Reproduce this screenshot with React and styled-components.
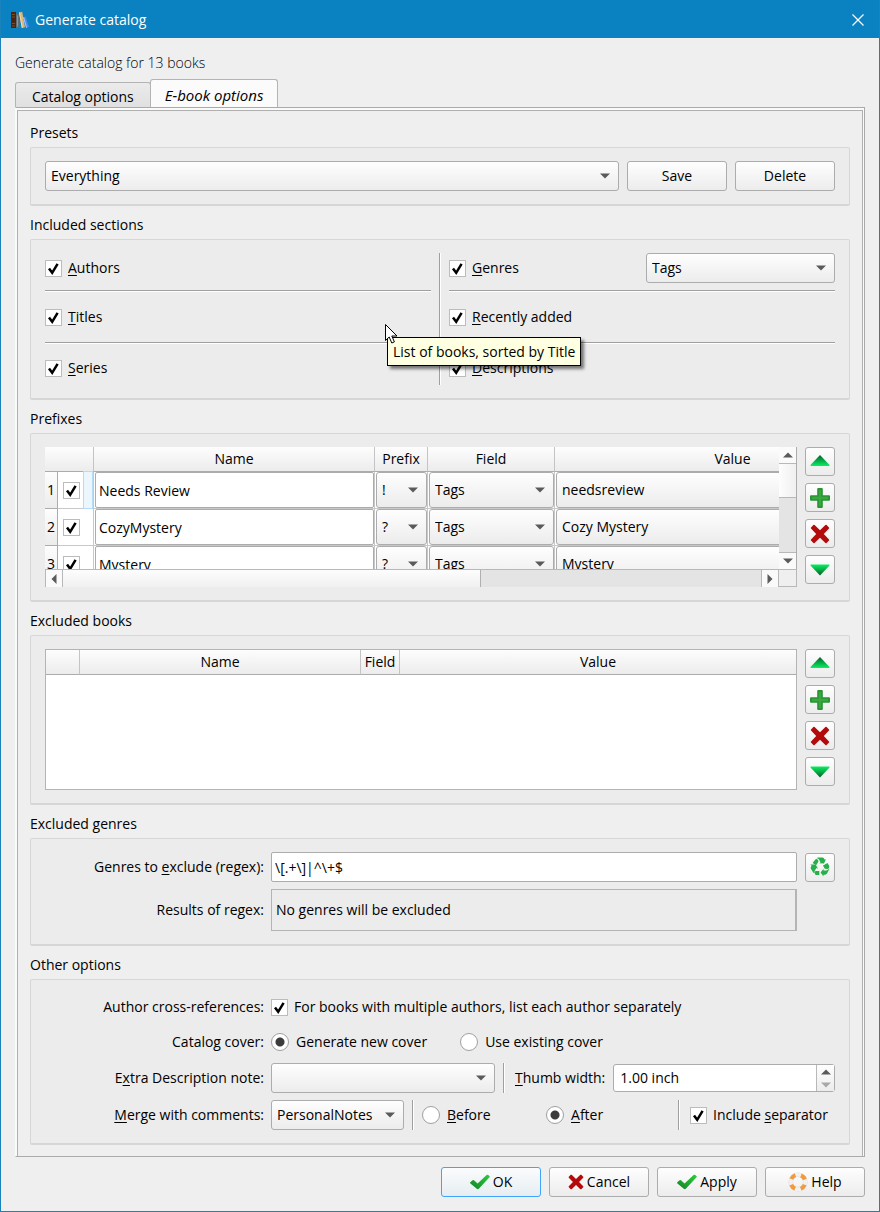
import React, { useState } from 'react'

import styled, { createGlobalStyle, css } from 'styled-components'

const prefixRules = [
  { id: 1, name: 'Needs Review', prefix: '!', field: 'Tags', value: 'needsreview' },
  { id: 2, name: 'CozyMystery', prefix: '?', field: 'Tags', value: 'Cozy Mystery' },
  { id: 3, name: 'Mystery', prefix: '?', field: 'Tags', value: 'Mystery' },
]

function Arrow(props) {
  return (
    <svg width='10' height='6' viewBox='0 0 10 6' aria-hidden='true'>
      <path d={props.up ? 'M0 5.5L5 .5L10 5.5Z' : 'M0 .5L5 5.5L10 .5Z'} fill={props.color || '#5a5a5a'}/>
    </svg>
  )
}

function SideArrow(props) {
  return (
    <svg width='6' height='10' viewBox='0 0 6 10' aria-hidden='true'>
      <path d={props.left ? 'M5.5 0L.5 5L5.5 10Z' : 'M.5 0L5.5 5L.5 10Z'} fill='#5a5a5a'/>
    </svg>
  )
}

function UpIcon() {
  return (
    <svg width='20' height='20' viewBox='0 0 20 20' aria-hidden='true'>
      <defs>
        <linearGradient id='upFill' x1='0' y1='0' x2='0' y2='1'>
          <stop offset='0' stopColor='#04602a'/>
          <stop offset='1' stopColor='#08f060'/>
        </linearGradient>
      </defs>
      <path d='M10 3L19.5 13Q19.6 14 19 14H1Q.4 14 .5 13Z' fill='url(#upFill)'/>
    </svg>
  )
}

function DownIcon() {
  return (
    <svg width='20' height='20' viewBox='0 0 20 20' aria-hidden='true'>
      <defs>
        <linearGradient id='downFill' x1='0' y1='0' x2='0' y2='1'>
          <stop offset='0' stopColor='#08f060'/>
          <stop offset='1' stopColor='#04602a'/>
        </linearGradient>
      </defs>
      <path d='M10 15.5L.5 5.5Q.4 4.5 1 4.5H19Q19.6 4.5 19.5 5.5Z' fill='url(#downFill)'/>
    </svg>
  )
}

function PlusIcon() {
  return (
    <svg width='20' height='20' viewBox='0 0 20 20' aria-hidden='true'>
      <path d='M8.2 0H11.8Q12.8 0 12.8 1V7.2H19Q20 7.2 20 8.2V11.8Q20 12.8 19 12.8H12.8V19Q12.8 20 11.8 20H8.2Q7.2 20 7.2 19V12.8H1Q0 12.8 0 11.8V8.2Q0 7.2 1 7.2H7.2V1Q7.2 0 8.2 0Z' fill='#2a9433'/>
      <path d='M10 2V18M2 10H18' stroke='#38a840' strokeWidth='2.4'/>
    </svg>
  )
}

function CrossIcon(props) {
  return (
    <svg width={props.size || 20} height={props.size || 20} viewBox='0 0 20 20' aria-hidden='true'>
      <path d='M4.6 1L10 6.2L15.4 1Q16 .6 16.6 1L19 3.4Q19.4 4 19 4.6L13.8 10L19 15.4Q19.4 16 19 16.6L16.6 19Q16 19.4 15.4 19L10 13.8L4.6 19Q4 19.4 3.4 19L1 16.6Q.6 16 1 15.4L6.2 10L1 4.6Q.6 4 1 3.4L3.4 1Q4 .6 4.6 1Z' fill='#b30b0b'/>
    </svg>
  )
}

function OkIcon() {
  return (
    <svg width='20' height='16' viewBox='0 0 20 16' aria-hidden='true'>
      <defs>
        <linearGradient id='okFill' x1='1' y1='0' x2='0' y2='1'>
          <stop offset='0' stopColor='#2ad03c'/>
          <stop offset='1' stopColor='#148226'/>
        </linearGradient>
      </defs>
      <path d='M.3 8.2L2.6 6.2Q3.3 5.8 3.9 6.3L7.6 9.6L16.6 .9Q17.4 .4 18.2 .9L19.6 2.2Q20 2.8 19.5 3.3L8.8 14.8Q7.8 15.5 6.8 14.8L.4 9.5Q-.1 8.8 .3 8.2Z' fill='url(#okFill)'/>
    </svg>
  )
}

function HelpIcon() {
  return (
    <svg width='20' height='20' viewBox='0 0 20 20' aria-hidden='true'>
      <circle cx='10' cy='10' r='7.3' fill='none' stroke='#dadada' strokeWidth='4.6'/>
      <circle cx='10' cy='10' r='7.3' fill='none' stroke='#f1f1f1' strokeWidth='3.8'/>
      <circle cx='10' cy='10' r='7.3' fill='none' stroke='#f29a3c' strokeWidth='4' strokeDasharray='5.73 5.74' strokeDashoffset='-2.87'/>
    </svg>
  )
}

function RecycleIcon() {
  return (
    <svg width='20' height='20' viewBox='0 0 20 20' aria-hidden='true'>
      <g fill='#25b04a'>
        <path d='M6.4 1.2Q7 .4 8 .4H12.4Q13.4 .4 13.9 1.3L14.7 2.7L16 2L14 6.6L9.2 6.2L10.6 5.3L8.9 2.4Q8.1 1 6.4 1.2Z'/>
        <path d='M5.6 2.2Q6.8 1.4 7.7 2.8L8.6 4.3L6.2 8.2L2.6 6.1Z'/>
        <path d='M.2 7.4H5.6L8 11.8L6.4 11L4.9 13.4Q4.1 14.8 4.8 16.2Q3.6 16.2 3 15.2L.9 11.7Q.4 10.8 .9 9.9L1.6 8.4Z'/>
        <path d='M5.3 13.9H9.3V18H6.4Q4 17.6 5.3 13.9Z'/>
        <path d='M19 10.9Q19.6 11.7 19.1 12.6L17 16.6Q16.4 17.7 15.2 17.7H13.5V19.5L10.6 15.6L13.5 11.8V13.5H16.6Q18.4 13.2 19 10.9Z'/>
        <path d='M14.9 7.5L17.5 6L19.3 9.1Q19.6 11.6 17.6 11.9L14.8 11.8L13 8.6Z'/>
      </g>
    </svg>
  )
}

function BooksIcon() {
  return (
    <svg width='18' height='18' viewBox='0 0 18 18' aria-hidden='true'>
      <rect x='0' y='1' width='5' height='16' fill='#4a2412'/>
      <path d='M1 3.5H4M1 6H4M1 12.5H4M1 15H4' stroke='#8a5a30' strokeWidth='.8'/>
      <rect x='5' y='3' width='3.4' height='14' fill='#5f6f78'/>
      <rect x='6' y='4.5' width='1' height='11' fill='#8b9aa0'/>
      <path d='M8 1.6L11.2 .8L14 16.2L10.8 17Z' fill='#d9b878'/>
      <path d='M8 1.6L9 1.4L11.8 16.8L10.8 17Z' fill='#f2dca6'/>
      <path d='M12 6.4L14.6 5.6L18 15.8L15.2 17Z' fill='#4c86f0'/>
      <path d='M12 6.4L13 6.1L16 16.6L15.2 17Z' fill='#a8c8ff'/>
    </svg>
  )
}

function Select(props) {
  return (
    <SelectWrap flex={props.flex} width={props.width}>
      <SelectBox id={props.id} aria-label={props.label} defaultValue={props.value} $cell={props.cell}>
        <option>{props.value}</option>
      </SelectBox>
      <SelectArrow><Arrow/></SelectArrow>
    </SelectWrap>
  )
}

function Check(props) {
  const [checked, setChecked] = useState(true);

  return (
    <OptionLabel>
      <Stack>
        <CheckInput type='checkbox' aria-label={props.label} checked={checked} onChange={() => setChecked(!checked)}/>
        {checked && 
          <svg width='17' height='17' viewBox='0 0 17 17' aria-hidden='true'>
            <path d='M4 8.4L7.2 12.8L12.6 3.8' fill='none' stroke='#000' strokeWidth='2.5'/>
          </svg>
        }
      </Stack>
      {props.children && <span>{props.children}</span>}
    </OptionLabel>
  )
}

function Radio(props) {
  return (
    <OptionLabel $radio>
      <RadioInput type='radio' name={props.name} defaultChecked={props.checked}/>
      <span>{props.children}</span>
    </OptionLabel>
  )
}

function Group(props) {
  return (
    <Fieldset>
      <Legend>{props.title}</Legend>
      <GroupBody>{props.children}</GroupBody>
    </Fieldset>
  )
}

function RuleButtons() {
  return (
    <ButtonColumn>
      <ToolButton aria-label='Move rule up'><UpIcon/></ToolButton>
      <ToolButton aria-label='Add rule'><PlusIcon/></ToolButton>
      <ToolButton aria-label='Remove rule'><CrossIcon/></ToolButton>
      <ToolButton aria-label='Move rule down'><DownIcon/></ToolButton>
    </ButtonColumn>
  )
}

function App() {
  const [tab, setTab] = useState('ebook');
  const [regex, setRegex] = useState('\\[.+\\]|^\\+$');
  const [thumb, setThumb] = useState('1.00 inch');

  return (
    <>
      <GlobalStyle/>
      <Window>
        <TitleBar>
          <BooksIcon/>
          <WindowTitle>Generate catalog</WindowTitle>
          <CloseButton aria-label='Close'>
            <svg width='12' height='12' viewBox='0 0 12 12' aria-hidden='true'>
              <path d='M.5 .5L11.5 11.5M11.5 .5L.5 11.5' stroke='#fff' strokeWidth='1.2'/>
            </svg>
          </CloseButton>
        </TitleBar>

        <Content>
          <Summary>Generate catalog for 13 books</Summary>

          <Tabs role='tablist'>
            <Tab role='tab' aria-selected={tab === 'catalog'} $active={tab === 'catalog'} onClick={() => setTab('catalog')}>Catalog options</Tab>
            <Tab role='tab' aria-selected={tab === 'ebook'} $active={tab === 'ebook'} onClick={() => setTab('ebook')}>E-book options</Tab>
          </Tabs>

          <Pane>
            <PaneInner>
              <Group title='Presets'>
                <Row>
                  <Select flex='1' label='Preset' value='Everything'/>
                  <Button>Save</Button>
                  <Button>Delete</Button>
                </Row>
              </Group>

              <Group title='Included sections'>
                <Sections>
                  <SectionColumn>
                    <SectionRow><Check><u>A</u>uthors</Check></SectionRow>
                    <HLine/>
                    <SectionRow $height='36px'><Check><u>T</u>itles</Check></SectionRow>
                    <HLine/>
                    <SectionRow $height='34px'><Check><u>S</u>eries</Check></SectionRow>
                  </SectionColumn>
                  <VLine/>
                  <SectionColumn>
                    <SectionRow>
                      <Check><u>G</u>enres</Check>
                      <Select width='189px' label='Genre field' value='Tags'/>
                    </SectionRow>
                    <HLine/>
                    <SectionRow $height='36px'><Check><u>R</u>ecently added</Check></SectionRow>
                    <HLine/>
                    <SectionRow $height='34px'><Check><u>D</u>escriptions</Check></SectionRow>
                  </SectionColumn>
                  <Pointer width='13' height='20' viewBox='0 0 13 20' aria-hidden='true'>
                    <path d='M.5 .5V16.5L4.2 13L6.8 19L9.4 17.9L6.8 12H12Z' fill='#fff' stroke='#000'/>
                  </Pointer>
                  <Tooltip role='tooltip'>List of books, sorted by Title</Tooltip>
                </Sections>
              </Group>

              <Group title='Prefixes'>
                <Row $top>
                  <ScrollFrame>
                    <Viewport>
                      <Table $width='866px'>
                        <colgroup>
                          <Col $width='13px'/>
                          <Col $width='36px'/>
                          <Col $width='281px'/>
                          <Col $width='53px'/>
                          <Col $width='127px'/>
                          <Col $width='356px'/>
                        </colgroup>
                        <thead>
                          <tr>
                            <Th $plain/>
                            <Th/>
                            <Th>Name</Th>
                            <Th>Prefix</Th>
                            <Th>Field</Th>
                            <Th>Value</Th>
                          </tr>
                        </thead>
                        <tbody>
                          {prefixRules.map((rule, i) => 
                            <tr key={rule.id}>
                              <RowHead scope='row'>{rule.id}</RowHead>
                              <Td>
                                <EnabledCell $current={i === 0}>
                                  <Check label={`Enable rule ${rule.id}`}/>
                                </EnabledCell>
                              </Td>
                              <Td><CellInput aria-label='Name' defaultValue={rule.name}/></Td>
                              <Td><Select cell label='Prefix' value={rule.prefix}/></Td>
                              <Td><Select cell label='Field' value={rule.field}/></Td>
                              <Td><Select cell label='Value' value={rule.value}/></Td>
                            </tr>
                          )}
                        </tbody>
                      </Table>
                    </Viewport>
                    <VScroll>
                      <ScrollButton aria-label='Scroll up'><Arrow up/></ScrollButton>
                      <VThumb/>
                      <ScrollButton aria-label='Scroll down' $last><Arrow/></ScrollButton>
                    </VScroll>
                    <HScroll>
                      <ScrollButton aria-label='Scroll left' $side><SideArrow left/></ScrollButton>
                      <HThumb/>
                      <HTrack/>
                      <ScrollButton aria-label='Scroll right' $side><SideArrow/></ScrollButton>
                    </HScroll>
                    <Corner/>
                  </ScrollFrame>
                  <RuleButtons/>
                </Row>
              </Group>

              <Group title='Excluded books'>
                <Row $top>
                  <EmptyFrame>
                    <Table $width='100%'>
                      <colgroup>
                        <Col $width='34px'/>
                        <Col $width='281px'/>
                        <Col $width='39px'/>
                        <col/>
                      </colgroup>
                      <thead>
                        <tr>
                          <Th/>
                          <Th>Name</Th>
                          <Th>Field</Th>
                          <Th $plain>Value</Th>
                        </tr>
                      </thead>
                    </Table>
                  </EmptyFrame>
                  <RuleButtons/>
                </Row>
              </Group>

              <Group title='Excluded genres'>
                <Form>
                  <FieldLabel htmlFor='regex'>Genres to <u>e</u>xclude (regex):</FieldLabel>
                  <Row>
                    <TextInput id='regex' value={regex} onChange={(e) => setRegex(e.target.value)}/>
                    <ToolButton aria-label='Reset regex'><RecycleIcon/></ToolButton>
                  </Row>
                  <FieldLabel as='span'>Results of regex:</FieldLabel>
                  <Results>No genres will be excluded</Results>
                </Form>
              </Group>

              <Group title='Other options'>
                <Form>
                  <FieldLabel as='span'>Author cross-references:</FieldLabel>
                  <OptionRow><Check>For books with multiple authors, list each author separately</Check></OptionRow>

                  <FieldLabel as='span'>Catalog cover:</FieldLabel>
                  <OptionRow $gap='33px'>
                    <Radio name='cover' checked>Generate new cover</Radio>
                    <Radio name='cover'>Use existing cover</Radio>
                  </OptionRow>

                  <FieldLabel htmlFor='note'>E<u>x</u>tra Description note:</FieldLabel>
                  <Row>
                    <Select id='note' width='224px' value=''/>
                    <VLine/>
                    <ThumbLabel htmlFor='thumb'><u>T</u>humb width:</ThumbLabel>
                    <Spin>
                      <SpinInput id='thumb' value={thumb} onChange={(e) => setThumb(e.target.value)}/>
                      <SpinButtons>
                        <SpinButton aria-label='Increase'><Arrow up/></SpinButton>
                        <SpinButton aria-label='Decrease'><Arrow color='#a8a8a8'/></SpinButton>
                      </SpinButtons>
                    </Spin>
                  </Row>

                  <FieldLabel htmlFor='merge'><u>M</u>erge with comments:</FieldLabel>
                  <Row>
                    <Select id='merge' width='133px' value='PersonalNotes'/>
                    <VLine/>
                    <MergeChoices>
                      <Radio name='merge'><u>B</u>efore</Radio>
                      <Radio name='merge' checked><u>A</u>fter</Radio>
                    </MergeChoices>
                    <VLine/>
                    <Separator><Check>Include <u>s</u>eparator</Check></Separator>
                  </Row>
                </Form>
              </Group>
            </PaneInner>
          </Pane>

          <Footer>
            <Button $primary><OkIcon/>OK</Button>
            <Button><CrossIcon size='16'/>Cancel</Button>
            <Button><OkIcon/>Apply</Button>
            <Button><HelpIcon/>Help</Button>
          </Footer>
        </Content>
      </Window>
    </>
  )
}

export default App

const GlobalStyle = createGlobalStyle`
  * {
    box-sizing: border-box;
  }
  body {
    margin: 0;
    background-color: #efefef;
  }
  body, button, input, select {
    font-family: "Open Sans", "Noto Sans", sans-serif;
    font-size: 14px;
    line-height: 20px;
    color: #000;
  }
  u {
    text-underline-offset: 2px;
  }
`
const face = css`
  border: 1px solid #acacac;
  border-radius: 3px;
  background: linear-gradient(#fefefe, #ececec);
`
const Window = styled.div`
  display: flex;
  flex-direction: column;
  min-height: 100vh;
  border: 1px solid #1b82bb;
  border-top: 0;
`
const TitleBar = styled.header`
  display: flex;
  align-items: center;
  height: 38px;
  padding: 2px 15px 0 10px;
  color: #fff;
  background-color: #0a81c0;
`
const WindowTitle = styled.h1`
  flex: 1;
  margin: 0 0 0 6px;
  font-size: 14px;
  font-weight: 400;
`
const CloseButton = styled.button`
  display: flex;
  padding: 0;
  border: 0;
  background: none;
`
const Content = styled.main`
  flex: 1;
  display: flex;
  flex-direction: column;
  padding: 15px 14px 14px;
`
const Summary = styled.div`
  font-weight: 300;
`
const Tabs = styled.div`
  display: flex;
  align-items: flex-end;
  margin-top: 6px;
`
const Tab = styled.button`
  height: 25px;
  padding: 4px 16px 0;
  border: 1px solid #b4b4b4;
  border-bottom: 0;
  border-radius: 3px 3px 0 0;
  background: linear-gradient(#ebebeb, #e0e0e0);

  ${(props) => props.$active && css`
    height: 28px;
    margin-left: -1px;
    padding: 2px 14px 0;
    font-size: 15px;
    font-style: italic;
    background: #fbfbfb;
  `}
`
const Pane = styled.div`
  flex: 1;
  padding: 2px 1px 0;
  border: 1px solid #aaaaaa;
  border-left-color: #fafafa;
  background-color: #fafafa;
`
const PaneInner = styled.div`
  height: 100%;
  padding: 12px 12px 11px;
  border: 1px solid #b0b0b0;
  border-bottom: 0;
  background-color: #efefef;
`
const Fieldset = styled.section`
  & + & {
    margin-top: 9px;
  }
`
const Legend = styled.h2`
  margin: 0 0 4px;
  font-size: 14px;
  font-weight: 400;
`
const GroupBody = styled.div`
  padding: 13px 14px;
  border: 1px solid #d6d6d6;
  border-bottom-width: 2px;
  border-radius: 2px;
  background-color: #ececec;
`
const Row = styled.div`
  display: flex;
  align-items: ${(props) => props.$top ? 'flex-start' : 'center'};
  gap: 8px;
`
const Button = styled.button`
  ${face}
  display: flex;
  align-items: center;
  justify-content: center;
  gap: 3px;
  width: 100px;
  height: 30px;
  padding: 0;

  ${(props) => props.$primary && css`
    border-color: #3fa4fb;
    background: linear-gradient(#fbfcfd, #e6edf2);
  `}
`
const ToolButton = styled.button`
  ${face}
  display: flex;
  align-items: center;
  justify-content: center;
  width: 30px;
  height: 29px;
  padding: 0;
`
const ButtonColumn = styled.div`
  display: flex;
  flex-direction: column;
  gap: 7px;
`
const SelectWrap = styled.div`
  display: grid;
  flex: ${(props) => props.flex || 'none'};
  width: ${(props) => props.width || 'auto'};
`
const SelectBox = styled.select`
  ${face}
  grid-area: 1 / 1;
  width: 100%;
  height: ${(props) => props.$cell ? '36px' : '30px'};
  padding: 0 26px 0 5px;
  appearance: none;
`
const SelectArrow = styled.span`
  grid-area: 1 / 1;
  display: flex;
  align-self: center;
  justify-self: end;
  margin-right: 9px;
  pointer-events: none;
`
const OptionLabel = styled.label`
  display: flex;
  align-items: center;
  gap: ${(props) => props.$radio ? '7px' : '6px'};
`
const Stack = styled.span`
  display: grid;

  & > * {
    grid-area: 1 / 1;
    pointer-events: none;
  }
`
const CheckInput = styled.input`
  width: 17px;
  height: 17px;
  margin: 0;
  border: 1px solid #bcbcbc;
  background-color: #fff;
  appearance: none;

  && {
    pointer-events: auto;
  }
`
const RadioInput = styled.input`
  width: 18px;
  height: 18px;
  margin: 0;
  border: 1px solid #a0a0a0;
  border-radius: 50%;
  background-color: #fff;
  appearance: none;

  &:checked {
    background: radial-gradient(circle, #3c3c3c 4px, #fff 5px);
  }
`
const Sections = styled.div`
  position: relative;
  display: flex;
  gap: 8px;
`
const SectionColumn = styled.div`
  flex: 1;
  display: flex;
  flex-direction: column;
  gap: 7px;
`
const SectionRow = styled.div`
  display: flex;
  align-items: center;
  justify-content: space-between;
  height: ${(props) => props.$height || '30px'};
`
const HLine = styled.hr`
  width: 100%;
  margin: 0;
  border: 0;
  border-top: 1px solid #9f9f9f;
  border-bottom: 1px solid #fff;
`
const VLine = styled.div`
  align-self: stretch;
  border-left: 1px solid #9f9f9f;
  border-right: 1px solid #fff;
`
const Pointer = styled.svg`
  position: absolute;
  z-index: 2;
  top: 71px;
  left: 340px;
`
const Tooltip = styled.div`
  position: absolute;
  z-index: 1;
  top: 84px;
  left: 342px;
  padding: 4px 5px 3px;
  border: 1px solid #000;
  background-color: #ffffe1;
  box-shadow: 3px 3px 3px rgba(0, 0, 0, 0.5);
  white-space: nowrap;
`
const ScrollFrame = styled.div`
  flex: 1;
  min-width: 0;
  display: grid;
  grid-template-columns: minmax(0, 1fr) 18px;
  grid-template-rows: 122px 18px;
`
const Viewport = styled.div`
  overflow: hidden;
`
const EmptyFrame = styled.div`
  flex: 1;
  min-width: 0;
  height: 141px;
  border: 1px solid #b4b4b4;
  background-color: #fff;
`
const Table = styled.table`
  width: ${(props) => props.$width};
  table-layout: fixed;
  border-collapse: separate;
  border-spacing: 0;
`
const Col = styled.col`
  width: ${(props) => props.$width};
`
const Th = styled.th`
  height: 25px;
  padding: 0;
  border-right: ${(props) => props.$plain ? '0' : '1px solid #c4c4c4'};
  border-bottom: 1px solid #acacac;
  font-weight: 400;
  background: linear-gradient(#fdfdfd, #ececec);
`
const RowHead = styled.th`
  padding: 0;
  border-right: 1px solid #acacac;
  border-bottom: 1px solid #acacac;
  font-weight: 400;
  background: linear-gradient(#fdfdfd, #ececec);
`
const Td = styled.td`
  height: 37px;
  padding: 0 0 0 1px;
  border-right: 1px solid #c8c8c8;
  border-bottom: 1px solid #c8c8c8;
  background-color: #fff;
`
const EnabledCell = styled.div`
  display: flex;
  align-items: center;
  justify-content: space-between;
  height: 36px;
  padding-left: 4px;

  ${(props) => props.$current && css`
    &::after {
      content: '';
      width: 8px;
      height: 100%;
      border: 1px solid #b4dcf8;
      background-color: #ecf6fd;
    }
  `}
`
const CellInput = styled.input`
  display: block;
  width: 100%;
  height: 36px;
  padding: 0 3px;
  border: 1px solid #acacac;
  border-radius: 2px;
  background-color: #fff;
`
const VScroll = styled.div`
  display: flex;
  flex-direction: column;
  border-right: 1px solid #acacac;
  background-color: #e4e4e4;
`
const VThumb = styled.div`
  height: 34px;
  margin-bottom: auto;
  border-bottom: 1px solid #b8b8b8;
  background: linear-gradient(90deg, #fdfdfd, #f0f0f0);
`
const HScroll = styled.div`
  display: flex;
  min-width: 0;
  border-top: 1px solid #b8b8b8;
  background-color: #e4e4e4;
`
const HThumb = styled.div`
  flex: 418;
  border-right: 1px solid #b0b0b0;
  background: linear-gradient(#fdfdfd, #f0f0f0);
`
const HTrack = styled.div`
  flex: 280;
`
const ScrollButton = styled.button`
  display: flex;
  align-items: center;
  justify-content: center;
  width: ${(props) => props.$side ? '18px' : 'auto'};
  height: ${(props) => props.$side ? 'auto' : '17px'};
  padding: 0;
  border: 0 solid #b8b8b8;
  background-color: #fafafa;

  ${(props) => props.$side ? css`
    border-left-width: 1px;
    border-right-width: 1px;
  ` : css`
    border-top-width: ${props.$last ? '1px' : '0'};
    border-bottom-width: ${props.$last ? '0' : '1px'};
  `}
`
const Corner = styled.div`
  border: 1px solid #b8b8b8;
  border-left: 0;
  background-color: #efefef;
`
const Form = styled.div`
  display: grid;
  grid-template-columns: 219px minmax(0, 1fr);
  align-items: center;
  gap: 7px;
`
const FieldLabel = styled.label`
  text-align: right;
`
const TextInput = styled.input`
  flex: 1;
  min-width: 0;
  height: 30px;
  padding: 0 3px;
  border: 1px solid #acacac;
  border-radius: 2px;
  background-color: #fff;
`
const Results = styled.output`
  height: 42px;
  margin-right: 38px;
  padding: 10px 4px;
  border: 1px solid #b4b4b4;
  border-right-width: 2px;
`
const OptionRow = styled.div`
  display: flex;
  align-items: center;
  gap: ${(props) => props.$gap || '8px'};
  height: 28px;
`
const ThumbLabel = styled.label`
  margin-left: 2px;
`
const Spin = styled.div`
  flex: 1;
  display: flex;
  min-width: 0;
  height: 28px;
  border: 1px solid #acacac;
  border-radius: 3px;
  background-color: #fff;
`
const SpinInput = styled.input`
  flex: 1;
  min-width: 0;
  padding: 0 6px;
  border: 0;
  background: none;
`
const SpinButtons = styled.div`
  display: flex;
  flex-direction: column;
  width: 18px;
  border-left: 1px solid #b8b8b8;
  background: linear-gradient(#fefefe, #ececec);
`
const SpinButton = styled.button`
  flex: 1;
  display: flex;
  align-items: center;
  justify-content: center;
  padding: 0;
  border: 0;
  background: none;
`
const MergeChoices = styled.div`
  flex: 1;
  display: grid;
  grid-template-columns: 1fr 1fr;
`
const Separator = styled.div`
  padding: 0 7px 0 2px;
`
const Footer = styled.footer`
  display: flex;
  justify-content: flex-end;
  gap: 8px;
  margin-top: 10px;
`
